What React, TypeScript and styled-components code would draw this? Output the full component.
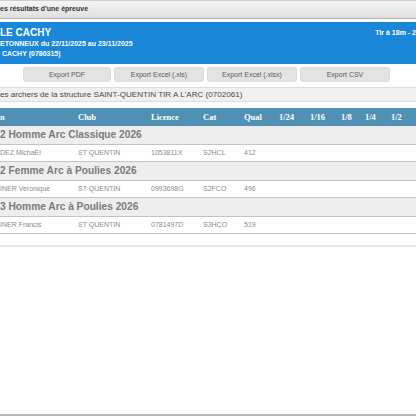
import React from "react";
import styled, { createGlobalStyle } from "styled-components";

const Global = createGlobalStyle`
  html, body { margin: 0; padding: 0; background: #fff; }
  body { font-family: "Liberation Sans", Arial, sans-serif; }
`;

const Page = styled.div`
  width: 416px;
  height: 414px;
  overflow: hidden;
  display: flex;
  flex-direction: column;
  border-bottom: 2px solid #b8b8b8;
  background: #fff;
`;

const TitleBar = styled.div`
  height: 17px;
  border-top: 1px solid #cfcfcf;
  border-bottom: 1px solid #b4b4b4;
  background: linear-gradient(#f6f6f6, #dedede);
  font-size: 7px;
  font-weight: bold;
  color: #333;
  line-height: 16px;
  white-space: nowrap;
`;

const InfoPanel = styled.div`
  margin-top: 3px;
  height: 42px;
  box-sizing: border-box;
  padding-top: 5px;
  background: #1b87d9;
  color: #fff;
  display: flex;
  justify-content: space-between;
  white-space: nowrap;
  font-weight: bold;
`;

const InfoLeft = styled.div`
  display: flex;
  flex-direction: column;
`;

const InfoTitle = styled.div`
  font-size: 10px;
  line-height: 12px;
`;

const InfoLine = styled.div<{ $h: number }>`
  font-size: 7px;
  line-height: ${(p) => p.$h}px;
`;

const InfoRight = styled.div`
  font-size: 7px;
  line-height: 12px;
`;

const ButtonRow = styled.div`
  margin-top: 3px;
  height: 15px;
  display: flex;
  gap: 3px;
  padding-left: 23px;
`;

const ExportButton = styled.div<{ $w: number }>`
  width: ${(p) => p.$w}px;
  height: 15px;
  box-sizing: border-box;
  border-radius: 3px;
  background: #e3e3e3;
  border: 1px solid #dadada;
  color: #5a5a5a;
  font-size: 7px;
  line-height: 13px;
  text-align: center;
  white-space: nowrap;
`;

const StructureBar = styled.div`
  margin-top: 5px;
  height: 15px;
  box-sizing: border-box;
  background: #f0f0f0;
  border-top: 1px solid #dcdcdc;
  border-bottom: 1px solid #dcdcdc;
  color: #484848;
  font-size: 8.1px;
  line-height: 13px;
  white-space: nowrap;
`;

const Table = styled.div`
  margin-top: 6px;
  display: flex;
  flex-direction: column;
`;

const cols = "78px 73px 52px 41px 35px 31px 31px 24px 26px 1fr";

const HeaderRow = styled.div`
  height: 18px;
  display: grid;
  grid-template-columns: ${cols};
  background: #5090b4;
  color: #fff;
  font-family: "Liberation Serif", "Times New Roman", serif;
  font-weight: bold;
  font-size: 8.5px;
  line-height: 18px;
  white-space: nowrap;
`;

const GroupRow = styled.div`
  height: 19px;
  box-sizing: border-box;
  background: #eeeeee;
  border-bottom: 1px solid #c4c4c4;
  color: #7a7a7a;
  font-weight: bold;
  font-size: 10.2px;
  line-height: 18px;
  white-space: nowrap;
`;

const DataRow = styled.div`
  height: 17px;
  box-sizing: border-box;
  display: grid;
  grid-template-columns: ${cols};
  background: #fff;
  border-bottom: 1px solid #c4c4c4;
  color: #8a8a8a;
  font-size: 7px;
  line-height: 16px;
  white-space: nowrap;
`;

const Cell = styled.div`
  overflow: visible;
`;

const Divider = styled.div`
  margin-top: 11px;
  height: 2px;
  background: #e8e8e8;
`;

const headers = ["n", "Club", "Licence", "Cat", "Qual", "1/24", "1/16", "1/8", "1/4", "1/2"];

const groups = [
  {
    title: "2 Homme Arc Classique 2026",
    row: ["DEZ MichaËl", "ST QUENTIN", "1053811X", "S2HCL", "412"],
  },
  {
    title: "2 Femme Arc à Poulies 2026",
    row: ["INER Veronique", "ST QUENTIN", "0993698G", "S2FCO", "496"],
  },
  {
    title: "3 Homme Arc à Poulies 2026",
    row: ["INER Francis", "ST QUENTIN", "0781497D", "S3HCO", "519"],
  },
];

const buttons = [
  { label: "Export PDF", w: 88 },
  { label: "Export Excel (.xls)", w: 90 },
  { label: "Export Excel (.xlsx)", w: 90 },
  { label: "Export CSV", w: 90 },
];

export default function App() {
  return (
    <>
      <Global />
      <Page>
        <TitleBar>es résultats d'une épreuve</TitleBar>
        <InfoPanel>
          <InfoLeft>
            <InfoTitle>LE CACHY</InfoTitle>
            <InfoLine $h={10}>ETONNEUX du 22/11/2025 au 23/11/2025</InfoLine>
            <InfoLine $h={9}>&nbsp;CACHY (0780315)</InfoLine>
          </InfoLeft>
          <InfoRight>Tir à 18m - 2</InfoRight>
        </InfoPanel>
        <ButtonRow>
          {buttons.map((b) => (
            <ExportButton key={b.label} $w={b.w}>
              {b.label}
            </ExportButton>
          ))}
        </ButtonRow>
        <StructureBar>es archers de la structure SAINT-QUENTIN TIR A L'ARC (0702061)</StructureBar>
        <Table>
          <HeaderRow>
            {headers.map((h) => (
              <Cell key={h}>{h}</Cell>
            ))}
          </HeaderRow>
          {groups.map((g) => (
            <React.Fragment key={g.title}>
              <GroupRow>{g.title}</GroupRow>
              <DataRow>
                {g.row.map((c, i) => (
                  <Cell key={i}>{c}</Cell>
                ))}
              </DataRow>
            </React.Fragment>
          ))}
        </Table>
        <Divider />
      </Page>
    </>
  );
}
